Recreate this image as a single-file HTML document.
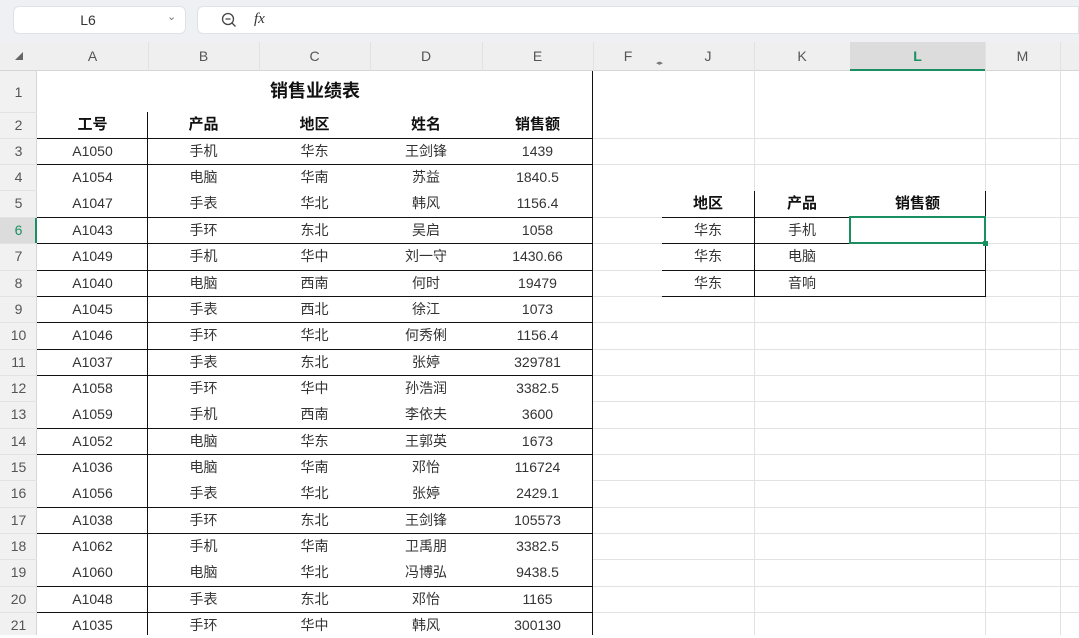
<!DOCTYPE html>
<html><head><meta charset="utf-8"><style>
*{margin:0;padding:0;box-sizing:border-box}
body{width:1079px;height:635px;overflow:hidden;background:#fff;position:relative;font-family:"Liberation Sans","Noto Sans CJK SC",sans-serif;color:#333}
.a{position:absolute}
.t{position:absolute;text-align:center;font-size:14px;line-height:26px;height:26px}
.b{font-weight:bold;font-size:15px;color:#111}
.hl{position:absolute;height:1px;background:#e2e2e2}
.vl{position:absolute;width:1px;background:#e2e2e2}
.bk{position:absolute;background:#111}
.rn{position:absolute;left:0;width:37px;text-align:center;font-size:14px;color:#555;line-height:26px}
.ch{position:absolute;top:42px;height:28px;line-height:28px;text-align:center;font-size:14px;color:#555}
</style></head><body>
<div class="a" style="left:0;top:0;width:1079px;height:42px;background:#eef0f3"></div>
<div class="a" style="left:13px;top:6px;width:173px;height:28px;background:#fff;border-radius:6px;border:1px solid #dfe2e6"></div>
<div class="a" style="left:13px;top:6px;width:150px;line-height:28px;text-align:center;font-size:14px">L6</div>
<div class="a" style="left:167px;top:10px;font-size:11px;color:#777">&#8964;</div>
<div class="a" style="left:197px;top:6px;width:882px;height:28px;background:#fff;border-radius:6px 0 0 6px;border:1px solid #dfe2e6"></div>
<svg class="a" style="left:221px;top:12px" width="16" height="16"><circle cx="7" cy="7" r="5.5" fill="none" stroke="#444" stroke-width="1.3"/><path d="M4.5 7h5M11 11l3.5 3.5" stroke="#444" stroke-width="1.3"/></svg>
<div class="a" style="left:254px;top:11px;font-size:15px;font-style:italic;font-family:'Liberation Serif',serif;color:#333">fx</div>
<div class="a" style="left:0;top:42px;width:1079px;height:29px;background:#efefef;border-bottom:1px solid #d6d6d6"></div>
<div class="a" style="left:850px;top:42px;width:135px;height:29px;background:#dcdcdc;border-bottom:2px solid #1a8f62"></div>
<div class="a" style="left:0;top:71px;width:37px;height:564px;background:#f1f1f1;border-right:1px solid #d6d6d6"></div>
<div class="a" style="left:0;top:217px;width:37px;height:26px;background:#dcdcdc;border-right:2px solid #1a8f62"></div>
<svg class="a" style="left:15px;top:52px" width="8" height="8"><path d="M0 8L8 0V8Z" fill="#666"/></svg>
<div class="vl" style="left:148px;top:42px;height:29px"></div><div class="vl" style="left:259px;top:42px;height:29px"></div><div class="vl" style="left:370px;top:42px;height:29px"></div><div class="vl" style="left:482px;top:42px;height:29px"></div><div class="vl" style="left:593px;top:42px;height:29px"></div><div class="vl" style="left:754px;top:42px;height:29px"></div><div class="vl" style="left:985px;top:42px;height:29px"></div><div class="vl" style="left:1060px;top:42px;height:29px"></div>
<div class="ch" style="left:37px;width:111px">A</div><div class="ch" style="left:148px;width:111px">B</div><div class="ch" style="left:259px;width:111px">C</div><div class="ch" style="left:370px;width:112px">D</div><div class="ch" style="left:482px;width:111px">E</div><div class="ch" style="left:593px;width:70px">F</div><div class="ch" style="left:662px;width:92px">J</div><div class="ch" style="left:754px;width:96px">K</div><div class="ch" style="left:850px;width:135px;color:#1a8f62;font-weight:bold">L</div><div class="ch" style="left:985px;width:75px">M</div>
<div class="a" style="left:656px;top:59px;font-size:7px;color:#777">◂▸</div>
<div class="vl" style="left:754px;top:71px;height:564px"></div><div class="vl" style="left:985px;top:71px;height:564px"></div><div class="vl" style="left:1060px;top:71px;height:564px"></div>
<div class="hl" style="left:593px;top:138px;width:486px"></div><div class="hl" style="left:593px;top:164px;width:486px"></div><div class="hl" style="left:593px;top:217px;width:486px"></div><div class="hl" style="left:593px;top:243px;width:486px"></div><div class="hl" style="left:593px;top:270px;width:486px"></div><div class="hl" style="left:593px;top:296px;width:486px"></div><div class="hl" style="left:593px;top:322px;width:486px"></div><div class="hl" style="left:593px;top:349px;width:486px"></div><div class="hl" style="left:593px;top:375px;width:486px"></div><div class="hl" style="left:593px;top:401px;width:486px"></div><div class="hl" style="left:593px;top:428px;width:486px"></div><div class="hl" style="left:593px;top:454px;width:486px"></div><div class="hl" style="left:593px;top:480px;width:486px"></div><div class="hl" style="left:593px;top:507px;width:486px"></div><div class="hl" style="left:593px;top:533px;width:486px"></div><div class="hl" style="left:593px;top:559px;width:486px"></div><div class="hl" style="left:593px;top:586px;width:486px"></div><div class="hl" style="left:593px;top:612px;width:486px"></div>
<div class="hl" style="left:0;top:112px;width:37px"></div><div class="hl" style="left:0;top:138px;width:37px"></div><div class="hl" style="left:0;top:164px;width:37px"></div><div class="hl" style="left:0;top:190px;width:37px"></div><div class="hl" style="left:0;top:217px;width:37px"></div><div class="hl" style="left:0;top:243px;width:37px"></div><div class="hl" style="left:0;top:270px;width:37px"></div><div class="hl" style="left:0;top:296px;width:37px"></div><div class="hl" style="left:0;top:322px;width:37px"></div><div class="hl" style="left:0;top:349px;width:37px"></div><div class="hl" style="left:0;top:375px;width:37px"></div><div class="hl" style="left:0;top:401px;width:37px"></div><div class="hl" style="left:0;top:428px;width:37px"></div><div class="hl" style="left:0;top:454px;width:37px"></div><div class="hl" style="left:0;top:480px;width:37px"></div><div class="hl" style="left:0;top:507px;width:37px"></div><div class="hl" style="left:0;top:533px;width:37px"></div><div class="hl" style="left:0;top:559px;width:37px"></div><div class="hl" style="left:0;top:586px;width:37px"></div><div class="hl" style="left:0;top:612px;width:37px"></div>
<div class="rn" style="top:79px">1</div><div class="rn" style="top:112px">2</div><div class="rn" style="top:138px">3</div><div class="rn" style="top:164px">4</div><div class="rn" style="top:190px">5</div><div class="rn" style="top:217px;color:#1a8f62">6</div><div class="rn" style="top:243px">7</div><div class="rn" style="top:270px">8</div><div class="rn" style="top:296px">9</div><div class="rn" style="top:322px">10</div><div class="rn" style="top:349px">11</div><div class="rn" style="top:375px">12</div><div class="rn" style="top:401px">13</div><div class="rn" style="top:428px">14</div><div class="rn" style="top:454px">15</div><div class="rn" style="top:480px">16</div><div class="rn" style="top:507px">17</div><div class="rn" style="top:533px">18</div><div class="rn" style="top:559px">19</div><div class="rn" style="top:586px">20</div><div class="rn" style="top:612px">21</div>
<div class="bk" style="left:592px;top:71px;width:1px;height:564px"></div>
<div class="bk" style="left:147px;top:112px;width:1px;height:523px"></div>
<div class="bk" style="left:37px;top:138px;width:556px;height:1px"></div><div class="bk" style="left:37px;top:164px;width:556px;height:1px"></div><div class="bk" style="left:37px;top:217px;width:556px;height:1px"></div><div class="bk" style="left:37px;top:243px;width:556px;height:1px"></div><div class="bk" style="left:37px;top:270px;width:556px;height:1px"></div><div class="bk" style="left:37px;top:296px;width:556px;height:1px"></div><div class="bk" style="left:37px;top:322px;width:556px;height:1px"></div><div class="bk" style="left:37px;top:349px;width:556px;height:1px"></div><div class="bk" style="left:37px;top:375px;width:556px;height:1px"></div><div class="bk" style="left:37px;top:428px;width:556px;height:1px"></div><div class="bk" style="left:37px;top:454px;width:556px;height:1px"></div><div class="bk" style="left:37px;top:507px;width:556px;height:1px"></div><div class="bk" style="left:37px;top:533px;width:556px;height:1px"></div><div class="bk" style="left:37px;top:586px;width:556px;height:1px"></div><div class="bk" style="left:37px;top:612px;width:556px;height:1px"></div>
<div class="t b" style="left:37px;top:78px;width:556px;font-size:18px">销售业绩表</div>
<div class="t b" style="left:37px;top:112px;width:111px">工号</div><div class="t b" style="left:148px;top:112px;width:111px">产品</div><div class="t b" style="left:259px;top:112px;width:111px">地区</div><div class="t b" style="left:370px;top:112px;width:112px">姓名</div><div class="t b" style="left:482px;top:112px;width:111px">销售额</div>
<div class="t" style="left:37px;top:138px;width:111px">A1050</div><div class="t" style="left:148px;top:138px;width:111px">手机</div><div class="t" style="left:259px;top:138px;width:111px">华东</div><div class="t" style="left:370px;top:138px;width:112px">王剑锋</div><div class="t" style="left:482px;top:138px;width:111px">1439</div>
<div class="t" style="left:37px;top:164px;width:111px">A1054</div><div class="t" style="left:148px;top:164px;width:111px">电脑</div><div class="t" style="left:259px;top:164px;width:111px">华南</div><div class="t" style="left:370px;top:164px;width:112px">苏益</div><div class="t" style="left:482px;top:164px;width:111px">1840.5</div>
<div class="t" style="left:37px;top:190px;width:111px">A1047</div><div class="t" style="left:148px;top:190px;width:111px">手表</div><div class="t" style="left:259px;top:190px;width:111px">华北</div><div class="t" style="left:370px;top:190px;width:112px">韩风</div><div class="t" style="left:482px;top:190px;width:111px">1156.4</div>
<div class="t" style="left:37px;top:217px;width:111px">A1043</div><div class="t" style="left:148px;top:217px;width:111px">手环</div><div class="t" style="left:259px;top:217px;width:111px">东北</div><div class="t" style="left:370px;top:217px;width:112px">吴启</div><div class="t" style="left:482px;top:217px;width:111px">1058</div>
<div class="t" style="left:37px;top:243px;width:111px">A1049</div><div class="t" style="left:148px;top:243px;width:111px">手机</div><div class="t" style="left:259px;top:243px;width:111px">华中</div><div class="t" style="left:370px;top:243px;width:112px">刘一守</div><div class="t" style="left:482px;top:243px;width:111px">1430.66</div>
<div class="t" style="left:37px;top:270px;width:111px">A1040</div><div class="t" style="left:148px;top:270px;width:111px">电脑</div><div class="t" style="left:259px;top:270px;width:111px">西南</div><div class="t" style="left:370px;top:270px;width:112px">何时</div><div class="t" style="left:482px;top:270px;width:111px">19479</div>
<div class="t" style="left:37px;top:296px;width:111px">A1045</div><div class="t" style="left:148px;top:296px;width:111px">手表</div><div class="t" style="left:259px;top:296px;width:111px">西北</div><div class="t" style="left:370px;top:296px;width:112px">徐江</div><div class="t" style="left:482px;top:296px;width:111px">1073</div>
<div class="t" style="left:37px;top:322px;width:111px">A1046</div><div class="t" style="left:148px;top:322px;width:111px">手环</div><div class="t" style="left:259px;top:322px;width:111px">华北</div><div class="t" style="left:370px;top:322px;width:112px">何秀俐</div><div class="t" style="left:482px;top:322px;width:111px">1156.4</div>
<div class="t" style="left:37px;top:349px;width:111px">A1037</div><div class="t" style="left:148px;top:349px;width:111px">手表</div><div class="t" style="left:259px;top:349px;width:111px">东北</div><div class="t" style="left:370px;top:349px;width:112px">张婷</div><div class="t" style="left:482px;top:349px;width:111px">329781</div>
<div class="t" style="left:37px;top:375px;width:111px">A1058</div><div class="t" style="left:148px;top:375px;width:111px">手环</div><div class="t" style="left:259px;top:375px;width:111px">华中</div><div class="t" style="left:370px;top:375px;width:112px">孙浩润</div><div class="t" style="left:482px;top:375px;width:111px">3382.5</div>
<div class="t" style="left:37px;top:401px;width:111px">A1059</div><div class="t" style="left:148px;top:401px;width:111px">手机</div><div class="t" style="left:259px;top:401px;width:111px">西南</div><div class="t" style="left:370px;top:401px;width:112px">李依夫</div><div class="t" style="left:482px;top:401px;width:111px">3600</div>
<div class="t" style="left:37px;top:428px;width:111px">A1052</div><div class="t" style="left:148px;top:428px;width:111px">电脑</div><div class="t" style="left:259px;top:428px;width:111px">华东</div><div class="t" style="left:370px;top:428px;width:112px">王郭英</div><div class="t" style="left:482px;top:428px;width:111px">1673</div>
<div class="t" style="left:37px;top:454px;width:111px">A1036</div><div class="t" style="left:148px;top:454px;width:111px">电脑</div><div class="t" style="left:259px;top:454px;width:111px">华南</div><div class="t" style="left:370px;top:454px;width:112px">邓怡</div><div class="t" style="left:482px;top:454px;width:111px">116724</div>
<div class="t" style="left:37px;top:480px;width:111px">A1056</div><div class="t" style="left:148px;top:480px;width:111px">手表</div><div class="t" style="left:259px;top:480px;width:111px">华北</div><div class="t" style="left:370px;top:480px;width:112px">张婷</div><div class="t" style="left:482px;top:480px;width:111px">2429.1</div>
<div class="t" style="left:37px;top:507px;width:111px">A1038</div><div class="t" style="left:148px;top:507px;width:111px">手环</div><div class="t" style="left:259px;top:507px;width:111px">东北</div><div class="t" style="left:370px;top:507px;width:112px">王剑锋</div><div class="t" style="left:482px;top:507px;width:111px">105573</div>
<div class="t" style="left:37px;top:533px;width:111px">A1062</div><div class="t" style="left:148px;top:533px;width:111px">手机</div><div class="t" style="left:259px;top:533px;width:111px">华南</div><div class="t" style="left:370px;top:533px;width:112px">卫禹朋</div><div class="t" style="left:482px;top:533px;width:111px">3382.5</div>
<div class="t" style="left:37px;top:559px;width:111px">A1060</div><div class="t" style="left:148px;top:559px;width:111px">电脑</div><div class="t" style="left:259px;top:559px;width:111px">华北</div><div class="t" style="left:370px;top:559px;width:112px">冯博弘</div><div class="t" style="left:482px;top:559px;width:111px">9438.5</div>
<div class="t" style="left:37px;top:586px;width:111px">A1048</div><div class="t" style="left:148px;top:586px;width:111px">手表</div><div class="t" style="left:259px;top:586px;width:111px">东北</div><div class="t" style="left:370px;top:586px;width:112px">邓怡</div><div class="t" style="left:482px;top:586px;width:111px">1165</div>
<div class="t" style="left:37px;top:612px;width:111px">A1035</div><div class="t" style="left:148px;top:612px;width:111px">手环</div><div class="t" style="left:259px;top:612px;width:111px">华中</div><div class="t" style="left:370px;top:612px;width:112px">韩风</div><div class="t" style="left:482px;top:612px;width:111px">300130</div>
<div class="bk" style="left:754px;top:191px;width:1px;height:106px"></div>
<div class="bk" style="left:985px;top:191px;width:1px;height:106px"></div>
<div class="bk" style="left:662px;top:217px;width:324px;height:1px"></div><div class="bk" style="left:662px;top:243px;width:324px;height:1px"></div><div class="bk" style="left:662px;top:270px;width:324px;height:1px"></div><div class="bk" style="left:662px;top:296px;width:324px;height:1px"></div>
<div class="t b" style="left:662px;top:191px;width:92px">地区</div><div class="t b" style="left:754px;top:191px;width:96px">产品</div><div class="t b" style="left:850px;top:191px;width:135px">销售额</div>
<div class="t" style="left:662px;top:217px;width:92px">华东</div><div class="t" style="left:754px;top:217px;width:96px">手机</div>
<div class="t" style="left:662px;top:243px;width:92px">华东</div><div class="t" style="left:754px;top:243px;width:96px">电脑</div>
<div class="t" style="left:662px;top:270px;width:92px">华东</div><div class="t" style="left:754px;top:270px;width:96px">音响</div>
<div class="a" style="left:849px;top:216px;width:137px;height:28px;border:2px solid #1a8f62"></div>
<div class="a" style="left:983px;top:241px;width:5px;height:5px;background:#1a8f62"></div>
</body></html>
